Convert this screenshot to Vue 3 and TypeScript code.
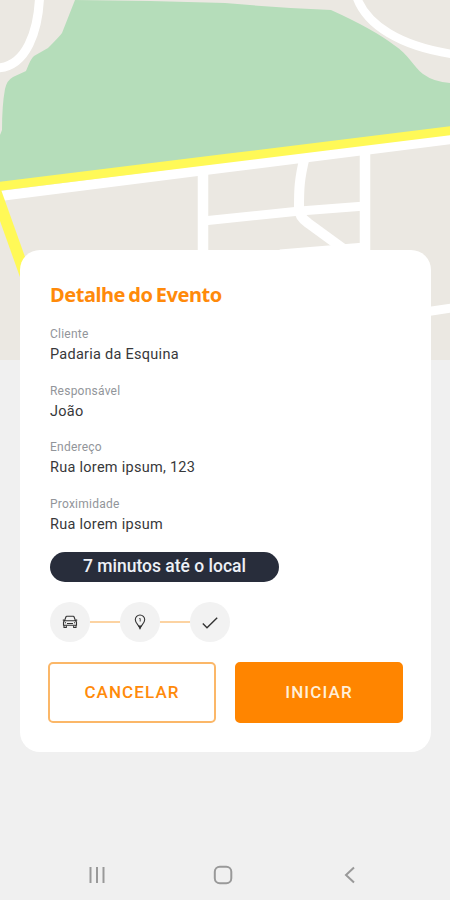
<script setup lang="ts">
interface Field {
  label: string
  value: string
}

const fields: Field[] = [
  { label: 'Cliente', value: 'Padaria da Esquina' },
  { label: 'Responsável', value: 'João' },
  { label: 'Endereço', value: 'Rua lorem ipsum, 123' },
  { label: 'Proximidade', value: 'Rua lorem ipsum' },
]
</script>

<template>
  <main class="screen">
    <svg class="map" viewBox="0 0 450 360" aria-hidden="true">
      <rect width="450" height="360" fill="#ebe8e2" />
      <path
        d="M75 0L62 33Q60 36 48 48L34 56Q31 58 26 71L13 77Q7 80 5 89Q2 105 2 130L0 135V190L450 134V83Q434 82 423 74C414 67 409 55 394 45Q373 29 331 10Q280 8 225 3L150 1Z"
        fill="#b5ddba"
      />
      <g fill="none" stroke="#fff">
        <path d="M39.500 -2C38 30 27 66 -2 68" stroke-width="9" />
        <path d="M357 -2C367 25 400 46 452 54" stroke-width="8.500" />
        <path d="M203 168V260M365 148V260" stroke-width="10.500" />
        <path d="M305 156C299 180 299 190 299 208Q299 217 308 223L345 250" stroke-width="10" />
        <path d="M203 221L300 211L365 206" stroke-width="9" />
        <path d="M280 254L365 247" stroke-width="9" />
        <path d="M425 312L452 308" stroke-width="9" />
        <path d="M0 196L225 167.500L452 139" stroke-width="10" />
      </g>
      <g fill="none" stroke="#fff957">
        <path d="M-6 187L30 288" stroke-width="11.500" />
        <path d="M-2 186.500L225 158.500L452 130.500" stroke-width="9" />
      </g>
    </svg>

    <section class="card">
      <h1 class="title">Detalhe do Evento</h1>

      <dl class="fields">
        <div v-for="field in fields" :key="field.label" class="field">
          <dt>{{ field.label }}</dt>
          <dd>{{ field.value }}</dd>
        </div>
      </dl>

      <div class="eta">7 minutos até o local</div>

      <div class="steps">
        <span class="step">
          <svg width="16" height="14" viewBox="0 0 16 14" fill="none" stroke="#333" stroke-width="1.100">
            <path d="M2.500 5.800L4 1.800Q4.200 1.300 4.800 1.300H11.200Q11.800 1.300 12 1.800L13.500 5.800M2.500 5.800H13.500L14.500 7V10.200H1.500V7ZM.8 4.800L2.500 5.800M15.200 4.800L13.500 5.800" />
            <path d="M2 10.200V12.500H4.300V10.500M11.700 10.500V12.500H14V10.200M5 8.500H11M2.800 7.800H4M12 7.800H13.200" />
          </svg>
        </span>
        <span class="link"></span>
        <span class="step">
          <svg width="12" height="16" viewBox="0 0 12 16" fill="none" stroke="#333" stroke-width="1.100">
            <path d="M6 14.500C5.300 11.500 1.300 9.400 1.300 5.700A4.700 4.700 0 0 1 10.700 5.700C10.700 9.400 6.700 11.500 6 14.500Z" />
            <path d="M5.300 4.500H6.200V7.500" stroke-width=".9" />
            <path d="M5 12H7L6 14.500Z" fill="#333" />
          </svg>
        </span>
        <span class="link"></span>
        <span class="step">
          <svg width="16" height="14" viewBox="0 0 16 14" fill="none" stroke="#333" stroke-width="1.400">
            <path d="M.8 8.500L5 12.700L15.200 2.800" />
          </svg>
        </span>
      </div>

      <div class="actions">
        <button type="button" class="button outline">CANCELAR</button>
        <button type="button" class="button solid">INICIAR</button>
      </div>
    </section>

    <nav class="navbar">
      <svg width="18" height="18" viewBox="0 0 18 18" fill="none" stroke="#999" stroke-width="2">
        <path d="M2.500 1V17M9 1V17M15.500 1V17" />
      </svg>
      <svg width="20" height="20" viewBox="0 0 20 20" fill="none" stroke="#999" stroke-width="2">
        <rect x="1.800" y="1.800" width="16.500" height="16.500" rx="5" />
      </svg>
      <svg width="12" height="18" viewBox="0 0 12 18" fill="none" stroke="#999" stroke-width="2">
        <path d="M10 1.500L2 9L10 16.500" />
      </svg>
    </nav>
  </main>
</template>

<style>
body {
  margin: 0;
  background: #f0f0f0;
}
</style>

<style scoped>
.screen {
  display: flex;
  flex-direction: column;
  width: 450px;
  height: 900px;
  overflow: hidden;
  background: #f0f0f0;
  font-family: Roboto, "Liberation Sans", sans-serif;
}

.map {
  display: block;
  flex: none;
  width: 450px;
  height: 360px;
}

.card {
  position: relative;
  box-sizing: border-box;
  width: 411px;
  height: 502px;
  margin: -110px 0 0 20px;
  padding: 31px 28px 30px;
  border-radius: 20px;
  background: #fff;
}

.title {
  margin: 0 0 0 2px;
  color: #ff8a0a;
  font: 700 20px/28px "Noto Sans", sans-serif;
  letter-spacing: -0.450px;
  word-spacing: -1.500px;
  white-space: nowrap;
}

.fields {
  display: flex;
  flex-direction: column;
  gap: 15.500px;
  margin: 15px 0 0 2px;
}

.field {
  height: 41px;
}

.field dt {
  height: 20px;
  color: #92959a;
  font-size: 12px;
  line-height: 20px;
  letter-spacing: 0.230px;
}

.field dd {
  margin: 0;
  color: #37383a;
  font-size: 14.500px;
  line-height: 22px;
  letter-spacing: 0.270px;
}

.eta {
  width: 229px;
  height: 30px;
  margin: 17.500px 0 0 2px;
  border-radius: 15px;
  background: #282d3b;
  color: #eef1f7;
  font-size: 17.500px;
  font-weight: 500;
  line-height: 29px;
  text-align: center;
}

.steps {
  display: flex;
  align-items: center;
  margin: 20px 0 0 2px;
}

.step {
  display: flex;
  align-items: center;
  justify-content: center;
  width: 40px;
  height: 40px;
  border-radius: 50%;
  background: #f2f2f2;
}

.link {
  width: 30px;
  height: 2px;
  background: #fcd3a2;
}

.actions {
  display: flex;
  gap: 19px;
  margin-top: 20px;
}

.button {
  box-sizing: border-box;
  width: 168px;
  height: 61px;
  padding: 0;
  border: 2px solid #fbb768;
  border-radius: 5px;
  font: 500 17px/57px Roboto, sans-serif;
  letter-spacing: 1.100px;
}

.outline {
  background: #fff;
  color: #ff8a0a;
}

.solid {
  border-color: #ff8500;
  background: #ff8500;
  color: #ffefd9;
}

.navbar {
  display: flex;
  align-items: center;
  justify-content: space-between;
  margin-top: auto;
  height: 50px;
  padding: 0 94px 0 88px;
}

.navbar svg:nth-child(2) {
  margin-right: 5px;
}
</style>
